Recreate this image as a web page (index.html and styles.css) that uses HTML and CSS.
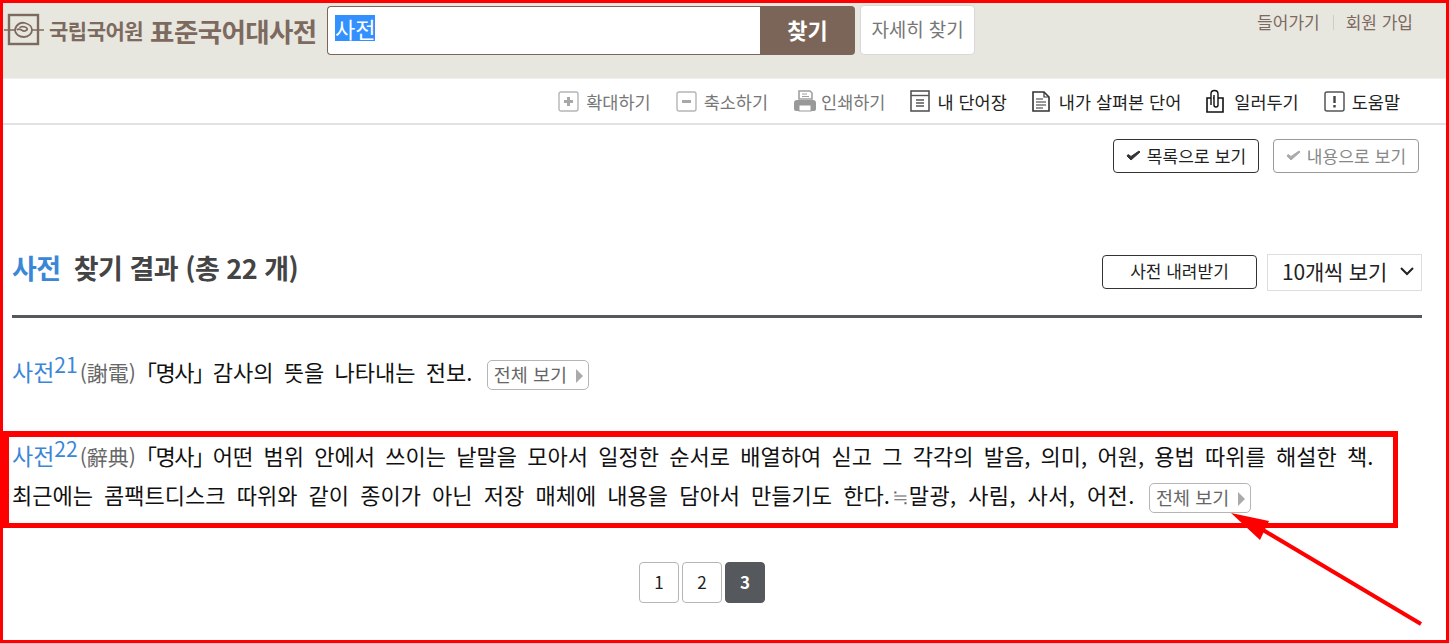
FILE: index.html
```html
<!DOCTYPE html>
<html lang="ko">
<head>
    <meta charset="UTF-8">
    <meta name="viewport" content="width=device-width, initial-scale=1.0">
    <title>표준국어대사전 - 사전 찾기 결과</title>
    <link rel="stylesheet" href="styles.css">
</head>
<body>
    <div class="frame">
        <header class="top">
            <div class="logo">
                <svg class="logo-mark" width="40" height="36" viewBox="0 0 40 36" fill="none" stroke="#7d6a5f">
                    <rect x="5" y="3" width="29" height="29" stroke-width="2.4"/>
                    <path d="M0 18h11M28 18h12" stroke-width="1.6"/>
                    <path d="M11 18c1-6 6-8 10-7 4 1 7 4 7 7s-3 7-8 7-9-3-9-7zM13 18c3-3 5 2 8 1s3-3 0-4-5 0-5 1" stroke-width="1.8"/>
                </svg>
                <span class="logo-small">국립국어원</span>
                <span class="logo-big">표준국어대사전</span>
            </div>
            <form class="search">
                <div class="search-box"><span class="selected">사전</span></div>
                <button type="button" class="search-btn">찾기</button>
            </form>
            <button type="button" class="detail-btn">자세히 찾기</button>
            <div class="member">
                <a>들어가기</a>
                <a class="join">회원 가입</a>
            </div>
        </header>

        <nav class="tools">
            <a class="tool muted">
                <svg width="21" height="21" viewBox="0 0 21 21"><rect x="1" y="1" width="19" height="19" rx="2" fill="#fff" stroke="#b5b5b5" stroke-width="1.4"/><path d="M6 10.5h9M10.5 6v9" stroke="#a8a8a8" stroke-width="3"/></svg>
                확대하기
            </a>
            <a class="tool muted">
                <svg width="21" height="21" viewBox="0 0 21 21"><rect x="1" y="1" width="19" height="19" rx="2" fill="#fff" stroke="#b5b5b5" stroke-width="1.4"/><path d="M6 10.5h9" stroke="#a8a8a8" stroke-width="3"/></svg>
                축소하기
            </a>
            <a class="tool muted tight">
                <svg width="24" height="22" viewBox="0 0 24 22"><path d="M6 1h11l2 2v6H6z" fill="#fff" stroke="#a0a0a0" stroke-width="1.6"/><path d="M9 4h5M9 6.500h7" stroke="#a0a0a0"/><path d="M1 13q0-3 3-3h16q3 0 3 3v6q0 2-2 2H3q-2 0-2-2z" fill="#999"/><rect x="6" y="15" width="12" height="6" fill="#fff" stroke="#999"/></svg>
                인쇄하기
            </a>
            <a class="tool">
                <svg width="20" height="22" viewBox="0 0 20 22" fill="none" stroke="#555"><rect x="1" y="1" width="18" height="20" stroke-width="1.6"/><path d="M1 5.500h18" stroke-width="1.400"/><path d="M6 10h8M6 13h8M6 16h8" stroke-width="1.300"/></svg>
                내 단어장
            </a>
            <a class="tool wide">
                <svg width="18" height="21" viewBox="0 0 18 21" fill="none" stroke="#333"><path d="M1 1h11l5 5v14H1z" stroke-width="1.600"/><path d="M12 1v5h5" stroke-width="1.200"/><path d="M4 8h7M4 11h10M4 14h10M4 17h7" stroke-width="1.200"/></svg>
                내가 살펴본 단어
            </a>
            <a class="tool wider">
                <svg width="18" height="24" viewBox="0 0 18 24" fill="none" stroke="#111"><path d="M1 9h16v14H1z" stroke-width="1.600" fill="#fff"/><path d="M5 16V5q0-3.500 3.500-3.500T12 5v11q0 2-2 2t-2-2V6" stroke-width="1.400" fill="#fff"/></svg>
                일러두기
            </a>
            <a class="tool">
                <svg width="21" height="21" viewBox="0 0 21 21"><rect x="1" y="1" width="19" height="19" rx="2" fill="#fff" stroke="#555" stroke-width="1.500"/><path d="M10.500 5v7M10.500 14v2.500" stroke="#444" stroke-width="2.400"/></svg>
                도움말
            </a>
        </nav>

        <div class="view-btns">
            <button type="button" class="view-btn">
                <svg width="15" height="11" viewBox="0 0 15 11"><path d="M1 6l4 4 9-8-1-1-8 5.500L2 4.500z" fill="#333" stroke="#333"/></svg>
                목록으로 보기
            </button>
            <button type="button" class="view-btn off">
                <svg width="15" height="11" viewBox="0 0 15 11"><path d="M1 6l4 4 9-8-1-1-8 5.500L2 4.500z" fill="#aaa" stroke="#aaa"/></svg>
                내용으로 보기
            </button>
        </div>

        <main class="content">
            <div class="result-head">
                <h2 class="result-title"><span class="word">사전</span> 찾기 결과 (총 22 개)</h2>
                <button type="button" class="down-btn">사전 내려받기</button>
                <div class="per-page">
                    10개씩 보기
                    <svg width="14" height="9" viewBox="0 0 14 9" fill="none" stroke="#222" stroke-width="2"><path d="M1 1l6 6 6-6"/></svg>
                </div>
            </div>

            <p class="entry first">
                <a class="word">사전<sup>21</sup></a><span class="hanja">(謝電)</span> <span class="pos">「명사」</span> 감사의 뜻을 나타내는 전보.
                <a class="more">전체 보기<i class="arrow"></i></a>
            </p>

            <p class="entry">
                <a class="word">사전<sup>22</sup></a><span class="hanja">(辭典)</span> <span class="pos">「명사」</span> 어떤 범위 안에서 쓰이는 낱말을 모아서 일정한 순서로 배열하여 싣고 그 각각의 발음, 의미, 어원, 용법 따위를 해설한 책.<br>
                <span class="line-end">최근에는 콤팩트디스크 따위와 같이 종이가 아닌 저장 매체에 내용을 담아서 만들기도 한다.<span class="hanja">≒</span><span class="synonyms">말광, 사림, 사서, 어전.</span></span>
                <a class="more">전체 보기<i class="arrow"></i></a>
            </p>

            <div class="pager">
                <a class="page">1</a>
                <a class="page">2</a>
                <a class="page on">3</a>
            </div>
        </main>

        <!-- 빨간 표시 -->
        <div class="mark-box"></div>
        <svg class="mark-arrow" width="200" height="120" viewBox="0 0 200 120">
            <path d="M193 114L35 20" stroke="#f00" stroke-width="4"/>
            <path d="M3 3l38 8-9 19z" fill="#f00"/>
        </svg>
    </div>
</body>
</html>
```

FILE: styles.css
```css
* {
    box-sizing: border-box;
}
body {
    margin: 0;
    font-family: "Noto Sans CJK KR", "Noto Sans", sans-serif;
    color: #222;
    background: #fff;
}
button {
    font-family: inherit;
    cursor: pointer;
}
.frame {
    position: relative;
    width: 1449px;
    height: 643px;
    border: 3px solid #f00;
    overflow: hidden;
}

/* header */
.top {
    display: flex;
    align-items: flex-start;
    height: 75px;
    padding: 2px 0 0 1px;
    background: #e8e7df;
}
.logo {
    display: flex;
    align-items: center;
    width: 323px;
    height: 50px;
    color: #7d6a5f;
    font-weight: 700;
    white-space: nowrap;
}
.logo-mark {
    flex: none;
}
.logo-small {
    margin-left: 5px;
    font-size: 21px;
    letter-spacing: -0.5px;
}
.logo-big {
    margin-left: 7px;
    font-size: 26.500px;
    letter-spacing: -0.6px;
}
.search {
    display: flex;
    width: 528px;
    height: 49px;
    margin-top: 1px;
}
.search-box {
    flex: 1;
    padding: 8px 7px 0;
    background: #fff;
    border: 1px solid #7a6558;
    border-right: 0;
    border-radius: 4px 0 0 4px;
    font-size: 22px;
    line-height: 26px;
}
.selected {
    display: inline-block;
    height: 26px;
    background: #3390ff;
    color: #fff;
}
.search-btn {
    width: 95px;
    padding: 0 0 4px;
    border: 0;
    border-radius: 0 4px 4px 0;
    background: #7a6558;
    color: #fff;
    font-size: 22px;
    font-weight: 700;
}
.detail-btn {
    width: 115px;
    height: 50px;
    margin-left: 5px;
    padding: 0 0 3px;
    border: 1px solid #d8d8d8;
    border-radius: 4px;
    background: #fff;
    color: #777;
    font-size: 19px;
    letter-spacing: -0.1px;
}
.member {
    display: flex;
    margin-left: auto;
    padding: 6px 33px 0 0;
    color: #7d6a5f;
    font-size: 17px;
    line-height: 22px;
}
.join {
    margin-left: 13px;
    padding-left: 13px;
    background: linear-gradient(#cfcdc4, #cfcdc4) left center / 1px 15px no-repeat;
}

/* toolbar */
.tools {
    display: flex;
    justify-content: flex-end;
    gap: 25px;
    height: 47px;
    padding: 10px 46px 0 0;
    border-top: 1px solid #f0f0f0;
    border-bottom: 2px solid #e2e2e2;
}
.tool {
    display: flex;
    align-items: center;
    gap: 7px;
    height: 24px;
    font-size: 17.500px;
    white-space: nowrap;
}
.tool.tight {
    gap: 4px;
}
.tool.wide {
    gap: 9px;
}
.tool.wider {
    gap: 10px;
}
.tool.muted {
    color: #777;
}

/* view buttons */
.view-btns {
    display: flex;
    justify-content: flex-end;
    gap: 14px;
    padding: 14px 27px 0 0;
}
.view-btn {
    display: flex;
    align-items: center;
    justify-content: center;
    gap: 6px;
    width: 146px;
    height: 34px;
    padding: 0 0 2px;
    border: 1px solid #333;
    border-radius: 4px;
    background: #fff;
    color: #222;
    font-size: 17px;
    letter-spacing: 0.1px;
}
.view-btn.off {
    border-color: #999;
    color: #888;
}

/* results */
.content {
    padding: 0 24px 0 9px;
}
.result-head {
    display: flex;
    align-items: flex-start;
    height: 145px;
    padding-top: 80px;
    border-bottom: 3px solid #55585c;
}
.result-title {
    flex: 1;
    margin: 0;
    color: #444;
    font-size: 27px;
    font-weight: 700;
    line-height: 30px;
    letter-spacing: -0.5px;
}
.result-title .word {
    margin-right: 6px;
}
.word {
    color: #3a87d8;
}
.down-btn {
    width: 155px;
    height: 34px;
    margin-top: 2px;
    padding: 0 0 3px;
    border: 1px solid #333;
    border-radius: 4px;
    background: #fff;
    color: #222;
    font-size: 17px;
}
.per-page {
    display: flex;
    align-items: center;
    justify-content: space-between;
    width: 155px;
    height: 37px;
    margin: 1px 0 0 10px;
    padding: 0 7px 3px 14px;
    border: 1px solid #ddd;
    font-size: 21px;
    letter-spacing: -0.2px;
}
.entry {
    margin: 0;
    font-size: 22px;
    line-height: 39px;
    color: #111;
    word-spacing: 4.100px;
}
.entry.first {
    padding-top: 34px;
    height: 118px;
}
.entry .word {
    font-size: 23px;
    line-height: 0;
}
.entry sup {
    font-size: 21px;
    line-height: 0;
    vertical-align: 8px;
}
.pos {
    font-feature-settings: "halt";
    letter-spacing: -1.500px;
}
.hanja {
    color: #666;
    margin-left: 2px;
    font-size: 21px;
    line-height: 0;
}
.line-end {
    word-spacing: 5px;
}
.synonyms {
    letter-spacing: 0.400px;
}
.more {
    display: inline-block;
    width: 102px;
    height: 30px;
    margin-left: 4px;
    padding-left: 6px;
    border: 1px solid #b5b5b5;
    border-radius: 5px;
    color: #666;
    font-size: 18.500px;
    line-height: 26px;
    vertical-align: -1px;
    word-spacing: 0;
    white-space: nowrap;
}
.arrow {
    display: inline-block;
    margin-left: 9px;
    border-left: 7px solid #aaa;
    border-top: 7px solid transparent;
    border-bottom: 7px solid transparent;
    vertical-align: -1px;
}
.pager {
    display: flex;
    justify-content: center;
    gap: 3px;
    margin-top: 48px;
    padding-right: 30px;
}
.page {
    width: 40px;
    height: 41px;
    border: 1px solid #b5b5b5;
    border-radius: 4px;
    font-size: 17px;
    line-height: 38px;
    text-align: center;
}
.page.on {
    border-color: #55585c;
    background: #55585c;
    color: #fff;
    font-weight: 700;
}

/* annotation */
.mark-box {
    position: absolute;
    left: 0;
    top: 428px;
    width: 1395px;
    height: 97px;
    border-style: solid;
    border-color: #f00;
    border-width: 6px 5px 5px 6px;
}
.mark-arrow {
    position: absolute;
    left: 1225px;
    top: 507px;
}
```
